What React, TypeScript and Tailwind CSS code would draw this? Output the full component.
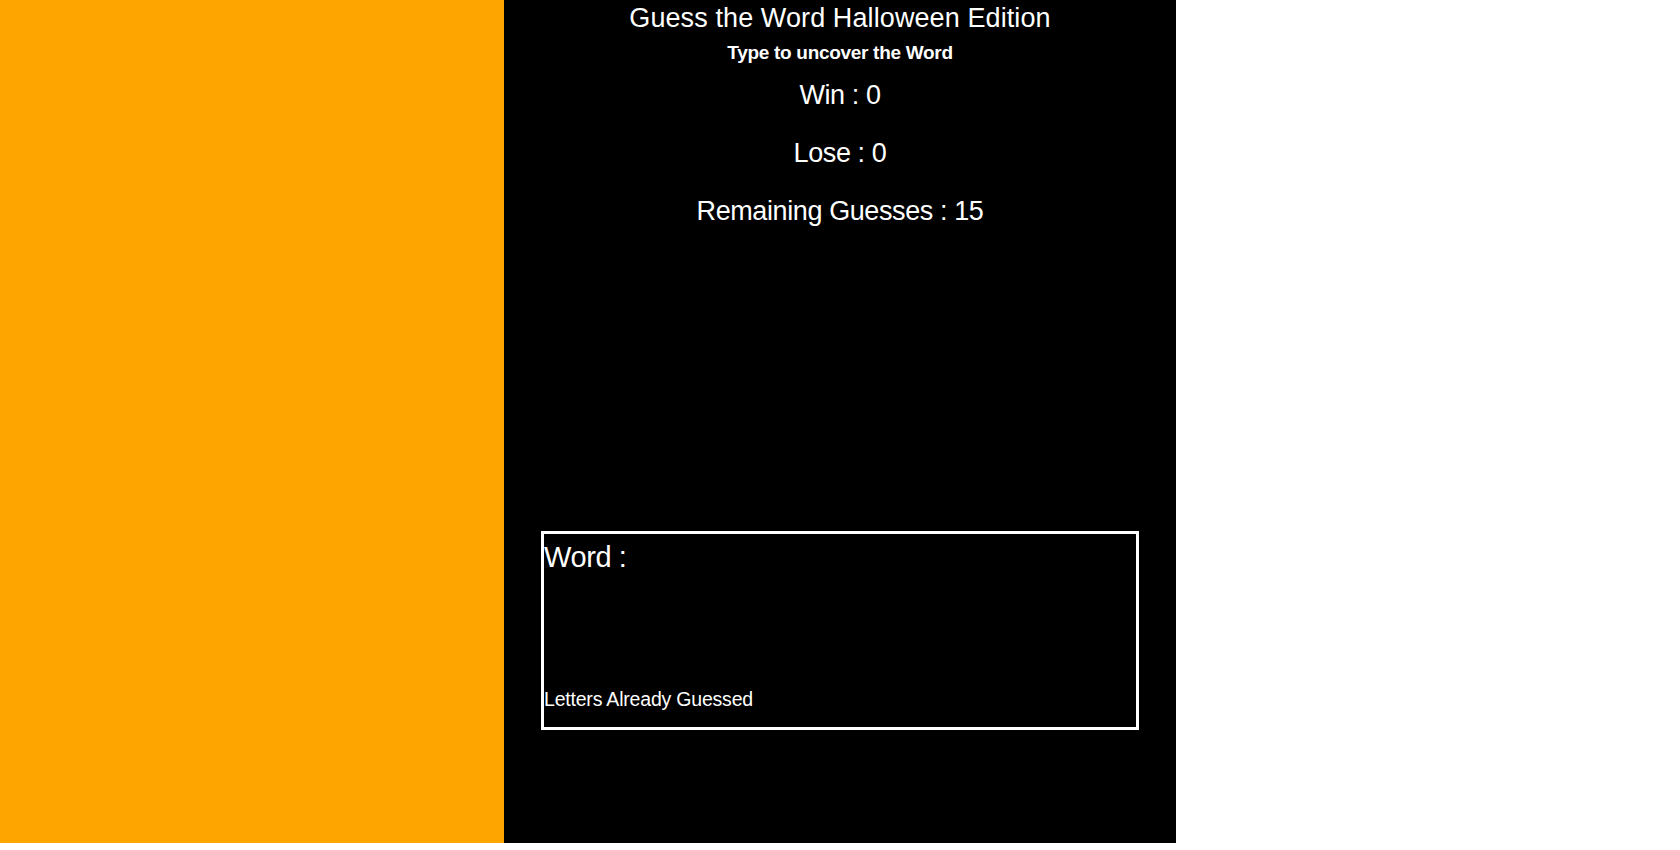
const stats = [
  { label: "Win", value: 0 },
  { label: "Lose", value: 0 },
  { label: "Remaining Guesses", value: 15 },
];

export default function App() {
  return (
    <div className="flex w-full font-['Liberation_Sans',Arial,sans-serif] text-white">
      {/* Left pumpkin panel */}
      <div className="h-[843px] w-[30%] bg-[#ffa500]" />

      {/* Game panel */}
      <div className="flex h-[843px] w-[40%] flex-col items-center bg-black">
        <h1 className="mt-[2px] text-[27px] leading-[32px] tracking-[0.1px]">Guess the Word Halloween Edition</h1>
        <h3 className="mt-[7px] text-[19px] font-bold leading-[24px] tracking-[-0.3px]">
          Type to uncover the Word
        </h3>

        <div className="mt-[14px] flex flex-col items-center gap-[26px]">
          {stats.map((s) => (
            <p key={s.label} className="text-[27px] leading-[32px] tracking-[-0.4px]">
              {s.label} : {s.value}
            </p>
          ))}
        </div>

        <div className="mt-[304px] flex h-[199px] w-[598px] flex-col justify-between border-[3px] border-white pt-[6px] pb-[16px]">
          <p className="text-[29px] leading-[34px] tracking-[-0.4px]">Word :</p>
          <p className="text-[19.5px] leading-[24px] tracking-[-0.2px]">Letters Already Guessed</p>
        </div>
      </div>
    </div>
  );
}
